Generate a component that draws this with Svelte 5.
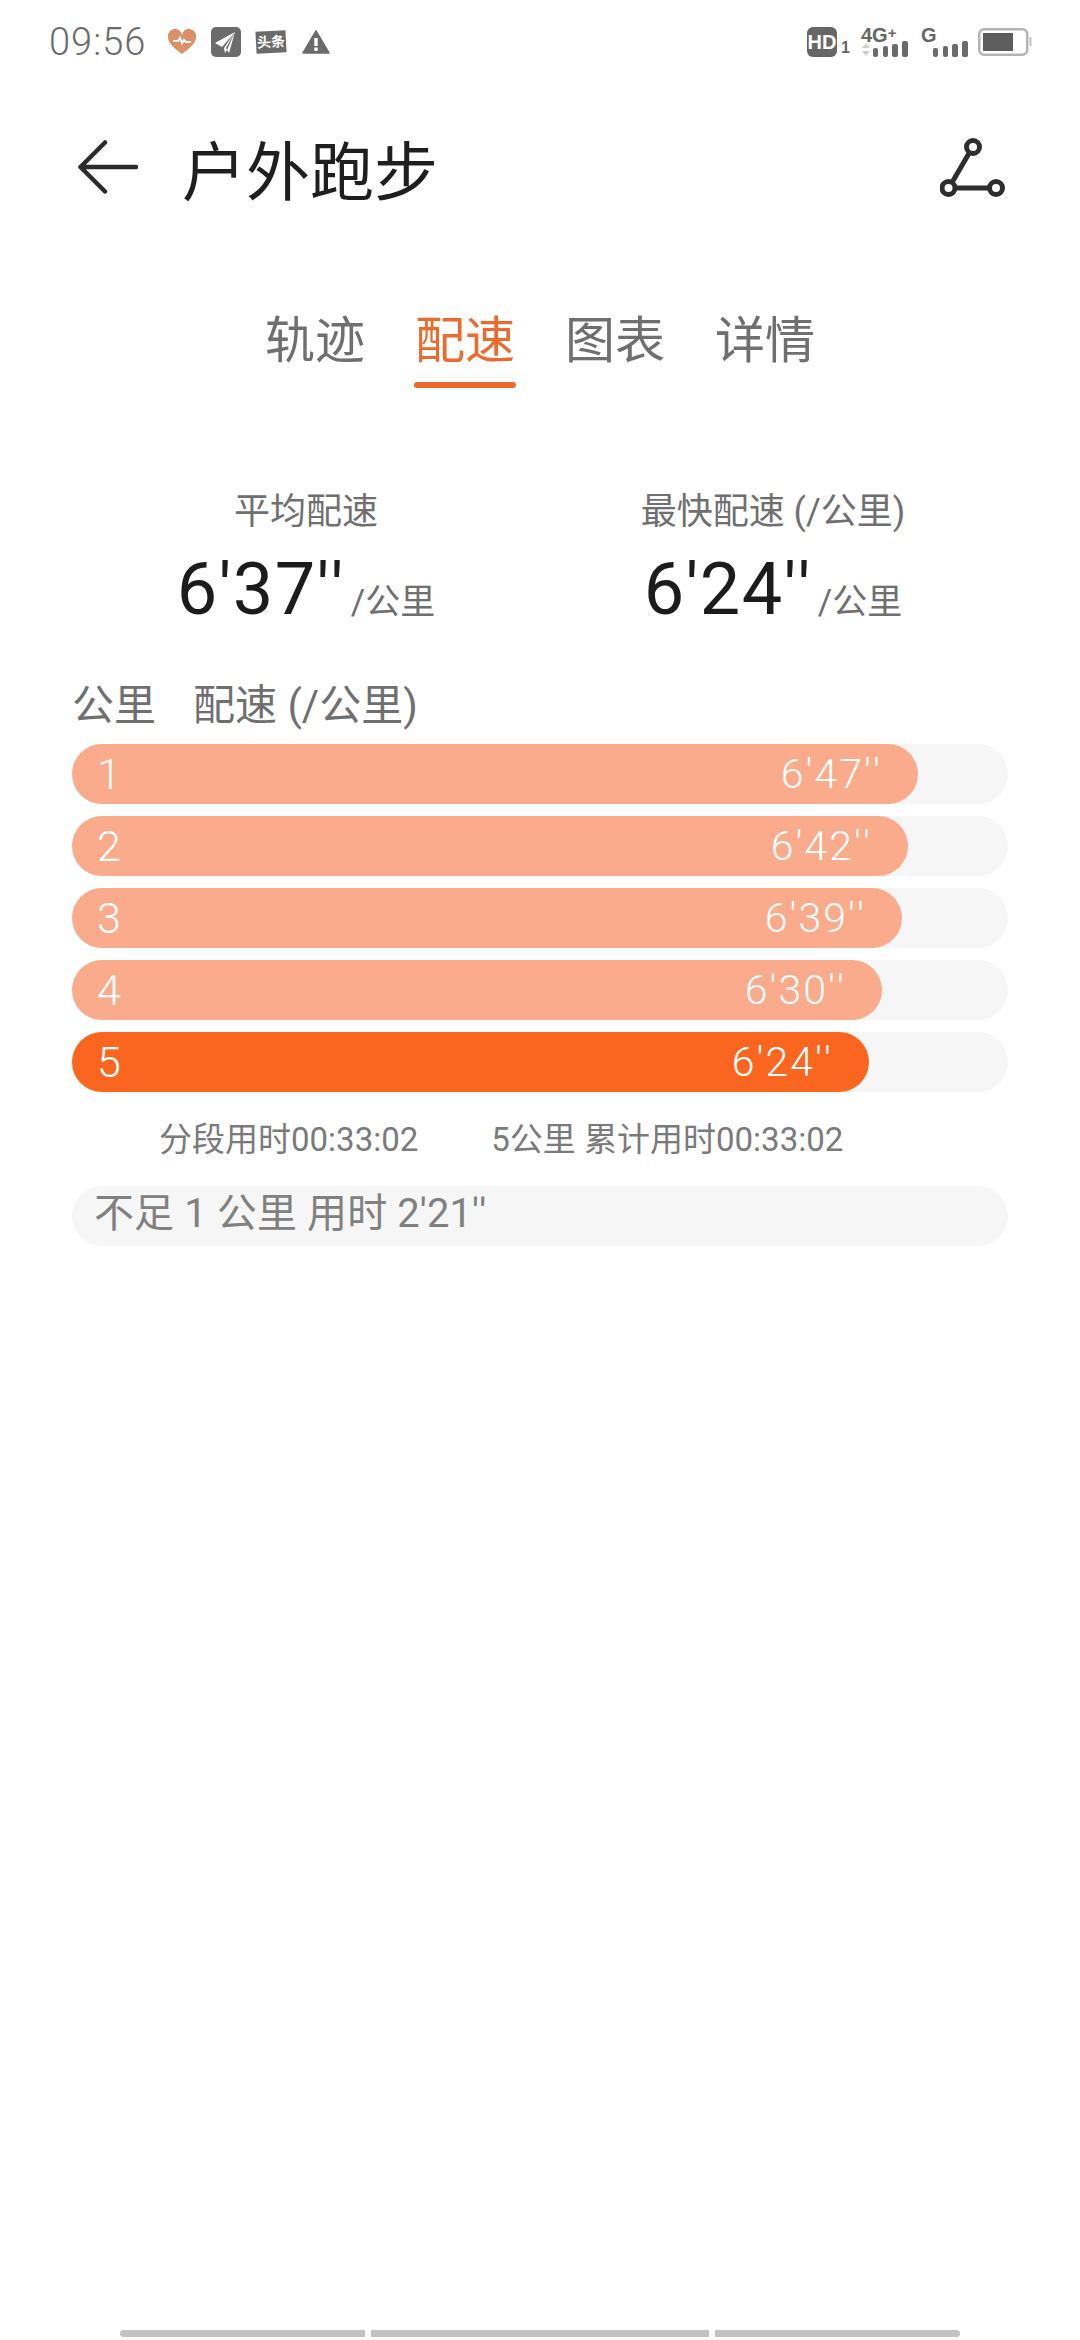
<script>
  const rows = [
    { n: 1, pace: "6'47''", w: 846 },
    { n: 2, pace: "6'42''", w: 836 },
    { n: 3, pace: "6'39''", w: 830 },
    { n: 4, pace: "6'30''", w: 810 },
    { n: 5, pace: "6'24''", w: 797, fast: true }
  ];
  const tabs = ['轨迹', '配速', '图表', '详情'];
</script>

<div class="page">
  <div class="status">
    <div class="status-left">
      <span class="time">09:56</span>
      <svg class="heart" width="30" height="26" viewBox="0 0 30 26">
        <path d="M15 25C7 19 1 14 1 8a7 7 0 0 1 14-2a7 7 0 0 1 14 2c0 6-6 11-14 17z" fill="#dc9068" />
        <path d="M6 12h5l2-3 2 5 2-3 2 2h5" fill="none" stroke="#fff" stroke-width="2" />
      </svg>
      <svg class="plane" width="30" height="30" viewBox="0 0 30 30">
        <rect width="30" height="30" rx="5" fill="#6b6b6b" />
        <path d="M24 5L4 16l7 4zM24 5L13 21l1 5 2-3zM24 5l-6 21-3-5z" fill="#fff" />
      </svg>
      <span class="toutiao">头条</span>
      <svg class="warn" width="28" height="24" viewBox="0 0 28 24">
        <path d="M14 1L27 23H1z" fill="#6b6b6b" stroke="#6b6b6b" stroke-width="1.500" stroke-linejoin="round" />
        <rect x="12.3" y="8" width="3.4" height="8" fill="#fff" />
        <rect x="12.3" y="17.500" width="3.4" height="3.4" fill="#fff" />
      </svg>
    </div>
    <div class="status-right">
      <span class="hd">HD</span>
      <span class="sim">1</span>
      <div class="net net-4g">
        <span class="net-label">4G<sup>+</sup></span>
        <svg class="signal" width="47" height="30" viewBox="0 0 47 30">
          <path d="M5 16l4 5H1zM5 29l4-5H1z" fill="#cfcfcf" />
          <rect x="12" y="21" width="5" height="9" rx="2" fill="#6b6b6b" />
          <rect x="22" y="19" width="5" height="11" rx="2" fill="#6b6b6b" />
          <rect x="31" y="17" width="6" height="13" rx="2" fill="#6b6b6b" />
          <rect x="41" y="14" width="6" height="16" rx="2" fill="#6b6b6b" />
        </svg>
      </div>
      <div class="net net-g">
        <span class="net-label">G</span>
        <svg class="signal" width="35" height="30" viewBox="0 0 35 30">
          <rect x="0" y="21" width="5" height="9" rx="2" fill="#6b6b6b" />
          <rect x="10" y="19" width="5" height="11" rx="2" fill="#6b6b6b" />
          <rect x="19" y="17" width="6" height="13" rx="2" fill="#6b6b6b" />
          <rect x="29" y="14" width="6" height="16" rx="2" fill="#6b6b6b" />
        </svg>
      </div>
      <svg class="battery" width="54" height="28" viewBox="0 0 54 28">
        <rect x="1.25" y="1.25" width="48" height="25.5" rx="5" fill="none" stroke="#b4b4b4" stroke-width="2.5" />
        <rect x="5" y="5" width="30" height="18" fill="#5e5e5e" />
        <rect x="51.5" y="9" width="2" height="9" fill="#c4c4c4" />
      </svg>
    </div>
  </div>

  <header class="appbar">
    <svg class="back" width="60" height="54" viewBox="0 0 60 54">
      <path d="M27 2.500L2.500 27L27 51.500M2.500 27H58" fill="none" stroke="#2b2b2b" stroke-width="4.500" stroke-linecap="round" stroke-linejoin="round" />
    </svg>
    <h1>户外跑步</h1>
    <svg class="route" width="66" height="66" viewBox="0 0 66 66">
      <g fill="none" stroke="#2e2e2e" stroke-width="5">
        <circle cx="33" cy="11" r="6.500" />
        <circle cx="8.500" cy="52" r="6.500" />
        <circle cx="56" cy="52" r="6.500" />
        <path d="M29.500 16.500L12 46.500M15 52h34.500" />
      </g>
    </svg>
  </header>

  <nav class="tabs">
    {#each tabs as t, i}
      <div class="tab" class:active={i === 1}>{t}</div>
    {/each}
  </nav>

  <section class="stats">
    <div class="stat stat-avg">
      <div class="stat-label">平均配速</div>
      <div class="stat-value"><span class="num-val">6'37''</span><span class="unit">/公里</span></div>
    </div>
    <div class="stat stat-fast">
      <div class="stat-label">最快配速 (/公里)</div>
      <div class="stat-value"><span class="num-val">6'24''</span><span class="unit">/公里</span></div>
    </div>
  </section>

  <div class="table-head"><span>公里</span><span>配速 (/公里)</span></div>

  <div class="rows">
    {#each rows as r}
      <div class="track">
        <div class="fill" class:fast={r.fast} style="width: {r.w}px">
          <span class="num">{r.n}</span>
          <span class="pace">{r.pace}</span>
        </div>
      </div>
    {/each}
  </div>

  <div class="summary"><span>分段用时00:33:02</span><span>5公里 累计用时00:33:02</span></div>

  <div class="note">不足 1 公里 用时 2'21''</div>

  <div class="gesture">
    <i class="g1"></i><i class="g2"></i><i class="g3"></i>
  </div>
</div>

<style>
  :global(body) {
    margin: 0;
    background: #fff;
  }
  .page {
    width: 1080px;
    height: 2340px;
    display: flex;
    flex-direction: column;
    font-family: Roboto, "Noto Sans CJK SC", sans-serif;
    color: #6f6f6f;
    overflow: hidden;
    font-kerning: none;
  }
  .status {
    height: 84px;
    display: flex;
    justify-content: space-between;
    align-items: flex-start;
    padding: 27px 48px 0 49px;
    box-sizing: border-box;
  }
  .status-left,
  .status-right {
    display: flex;
    align-items: center;
    height: 30px;
  }
  .time {
    font-size: 38px;
    font-weight: 300;
    line-height: 30px;
    letter-spacing: 1px;
    color: #6b6b6b;
    width: 118px;
  }
  .plane { margin-left: 14px; }
  .toutiao {
    margin-left: 15px;
    width: 30px;
    height: 22px;
    background: #6b6b6b;
    color: #fff;
    font-size: 14px;
    font-weight: 700;
    line-height: 22px;
    text-align: center;
    white-space: nowrap;
    transform: rotate(-3deg);
  }
  .warn { margin-left: 16px; }
  .hd {
    width: 30px;
    height: 30px;
    border-radius: 6px;
    background: #666;
    color: #fff;
    font: 700 20px/30px "Liberation Sans", sans-serif;
    text-align: center;
    white-space: nowrap;
  }
  .sim {
    margin: 12px 0 0 4px;
    width: 20px;
    color: #666;
    font: 700 16px/18px "Liberation Sans", sans-serif;
  }
  .net {
    position: relative;
    height: 30px;
  }
  .net-label {
    position: absolute;
    left: 0;
    top: -2px;
    color: #666;
    font: 700 20px/20px "Liberation Sans", sans-serif;
    white-space: nowrap;
  }
  .net-label sup {
    font-size: 15px;
    line-height: 0;
    vertical-align: 4px;
  }
  .net-g { margin-left: 13px; padding-left: 12px; }
  .battery { margin-left: 10px; }
  .appbar {
    height: 170px;
    display: flex;
    align-items: center;
    padding: 0 0 0 78px;
    box-sizing: border-box;
  }
  .back { margin-bottom: 4px; }
  h1 {
    margin: 0 0 5px 44px;
    flex: 1;
    font-size: 64px;
    font-weight: 400;
    color: #1f1f1f;
  }
  .route { margin-right: 74px; }
  .tabs {
    display: flex;
    justify-content: center;
    gap: 50px;
  }
  .tab {
    width: 100px;
    height: 134px;
    box-sizing: border-box;
    padding-top: 55px;
    font-size: 50px;
    line-height: 64px;
    color: #6f6f6f;
    text-align: center;
    white-space: nowrap;
  }
  .tab.active {
    color: #ee6a2c;
    position: relative;
  }
  .tab.active::after {
    content: "";
    position: absolute;
    left: -1px;
    right: -1px;
    bottom: 0;
    height: 6px;
    border-radius: 3px;
    background: #ee6a2c;
  }
  .stats {
    display: grid;
    grid-template-columns: 468px 466px;
    height: 190px;
    margin-top: 100px;
    padding-left: 72px;
  }
  .stat {
    text-align: center;
  }
  .stat-label {
    font-size: 36px;
    line-height: 48px;
    color: #6f6f6f;
  }
  .stat-value {
    margin-top: 14px;
    font-size: 72px;
    line-height: 80px;
    color: #1c1c1c;
    white-space: nowrap;
  }
  .num-val {
    letter-spacing: 1.5px;
  }
  .unit {
    font-size: 35px;
    color: #6f6f6f;
    margin-left: 6px;
  }
  .table-head {
    display: flex;
    gap: 37px;
    padding-left: 72px;
    font-size: 42px;
    line-height: 56px;
    color: #6f6f6f;
  }
  .rows {
    display: flex;
    flex-direction: column;
    gap: 12px;
    margin: 10px 72px 0;
  }
  .track {
    height: 60px;
    border-radius: 30px;
    background: #f6f6f6;
  }
  .fill {
    height: 60px;
    border-radius: 30px;
    background: #f9ab8b;
    color: #fff;
    display: flex;
    justify-content: space-between;
    align-items: center;
    padding: 0 36px 0 25px;
    box-sizing: border-box;
    font-size: 41px;
    font-weight: 300;
  }
  .num { font-size: 43px; }
  .pace { letter-spacing: 2px; }
  .fill.fast { background: #fa6620; }
  .summary {
    display: flex;
    gap: 73px;
    padding-left: 159px;
    margin-top: 26px;
    font-size: 33px;
    line-height: 44px;
    color: #7a7a7a;
  }
  .note {
    margin: 24px 72px 0;
    height: 60px;
    border-radius: 30px;
    background: #f6f6f6;
    padding-left: 22px;
    font-size: 40px;
    letter-spacing: 0.100px;
    line-height: 56px;
    color: #808080;
  }
  .gesture {
    margin-top: auto;
    margin-bottom: 3px;
    display: flex;
    gap: 6px;
    padding-left: 120px;
  }
  .gesture i {
    display: block;
    height: 7px;
    background: #c2c2c2;
  }
  .g1 { width: 245px; border-radius: 4px 0 0 4px; }
  .g2 { width: 338px; }
  .g3 { width: 245px; border-radius: 0 4px 4px 0; }
</style>
